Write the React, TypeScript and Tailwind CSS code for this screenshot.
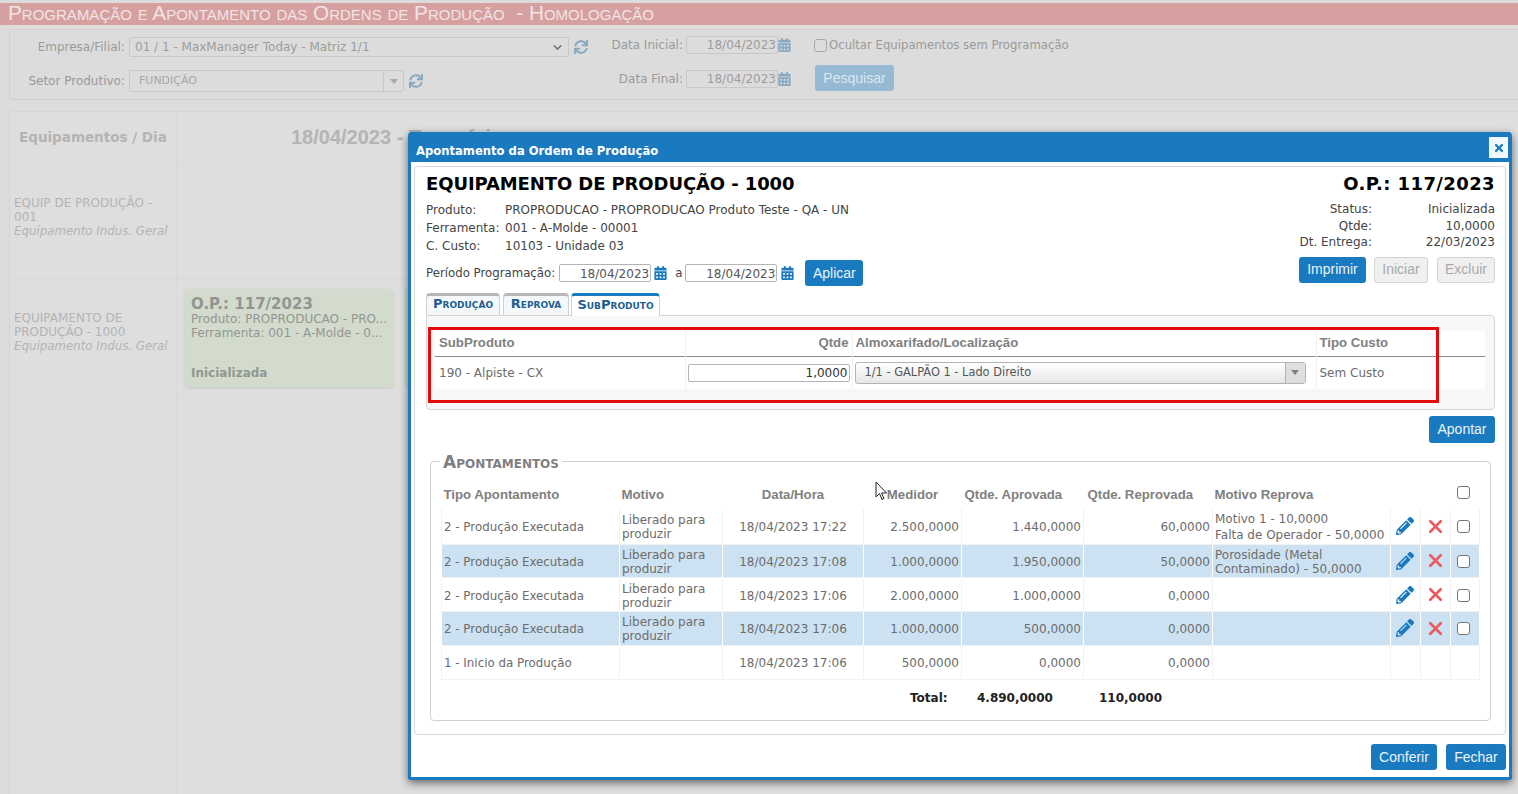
import { ChevronDown, X } from "lucide-react";
import { FaCalendarAlt, FaPencilAlt, FaSync, FaTimes } from "react-icons/fa";

const verdana = "font-['DejaVu_Sans',Verdana,sans-serif]";
const arial = "font-['Liberation_Sans',Arial,sans-serif]";

const rows = [
  {
    tipo: "2 - Produção Executada",
    motivo: "Liberado para produzir",
    data: "18/04/2023 17:22",
    medidor: "2.500,0000",
    aprovada: "1.440,0000",
    reprovada: "60,0000",
    reprova: ["Motivo 1 - 10,0000", "Falta de Operador - 50,0000"],
    h: "h-[35px]",
    actions: true,
    blue: false,
  },
  {
    tipo: "2 - Produção Executada",
    motivo: "Liberado para produzir",
    data: "18/04/2023 17:08",
    medidor: "1.000,0000",
    aprovada: "1.950,0000",
    reprovada: "50,0000",
    reprova: ["Porosidade (Metal Contaminado) - 50,0000"],
    h: "h-[33.7px]",
    actions: true,
    blue: true,
  },
  {
    tipo: "2 - Produção Executada",
    motivo: "Liberado para produzir",
    data: "18/04/2023 17:06",
    medidor: "2.000,0000",
    aprovada: "1.000,0000",
    reprovada: "0,0000",
    reprova: [],
    h: "h-[33.7px]",
    actions: true,
    blue: false,
  },
  {
    tipo: "2 - Produção Executada",
    motivo: "Liberado para produzir",
    data: "18/04/2023 17:06",
    medidor: "1.000,0000",
    aprovada: "500,0000",
    reprovada: "0,0000",
    reprova: [],
    h: "h-[33.7px]",
    actions: true,
    blue: true,
  },
  {
    tipo: "1 - Inicio da Produção",
    motivo: "",
    data: "18/04/2023 17:06",
    medidor: "500,0000",
    aprovada: "0,0000",
    reprovada: "0,0000",
    reprova: [],
    h: "h-[34px]",
    actions: false,
    blue: false,
  },
];

function Check({ faded }: { faded?: boolean }) {
  return (
    <span
      className={`inline-block w-[13px] h-[13px] rounded-[3px] border align-middle ${
        faded ? "border-[#a8a8a8] bg-[#dcdcdc]" : "border-[#767676] bg-white"
      }`}
    />
  );
}

function Btn({ label, off, className = "" }: { label: string; off?: boolean; className?: string }) {
  return (
    <div
      className={`${arial} flex items-center justify-center rounded-[3px] text-[14px] ${
        off
          ? "bg-[#f0f0f0] border border-[#d4d4d4] text-[#a9a9a9]"
          : "bg-[#1a7abf] text-[#e8f4fc]"
      } ${className}`}
    >
      {label}
    </div>
  );
}

function DateBox({ value }: { value: string }) {
  return (
    <div className="w-[92px] h-[18px] border border-[#b4b4b4] rounded-[2px] bg-white text-[12px] text-[#555] text-right pr-[1px] leading-[18px]">
      {value}
    </div>
  );
}

function BackDate({ label }: { label: string }) {
  return (
    <div className="flex items-center">
      <span className="w-[83px] text-right text-[12px] text-[#9a9a9a]">{label}</span>
      <div className="w-[92px] h-[18px] ml-[3px] border border-[#c8c8c8] rounded-[2px] bg-[#dcdcdc] text-[12px] text-[#9c9c9c] text-right pr-[1px] leading-[17px]">
        18/04/2023
      </div>
      <FaCalendarAlt className="text-[#86a9c4] w-[13px] h-[14px]" />
    </div>
  );
}

export default function App() {
  return (
    <div className={`${verdana} relative w-[1518px] h-[794px] overflow-hidden bg-[#dcdcdc]`}>
      {/* Fundo escurecido */}
      <div className="pt-[3px]">
        <div
          className={`${arial} h-[22px] bg-[#d6a0a0] pl-[8px] text-[20.8px] leading-[20px] text-[#f2e4e4] [font-variant:small-caps] whitespace-pre`}
        >
          Programação e Apontamento das Ordens de Produção  - Homologação
        </div>

        <div className="ml-[9px] mt-[4px] h-[71px] border border-[#d0d0d0] rounded-l-[4px] border-r-0 flex">
          <div className="w-[590px] flex flex-col pt-[7px] gap-[13px]">
            <div className="flex items-center h-[20px]">
              <span className="w-[115px] text-right text-[12px] text-[#9a9a9a]">Empresa/Filial:</span>
              <div className="ml-[4px] w-[440px] h-[20px] border border-[#c8c8c8] rounded-[2px] text-[12px] text-[#9c9c9c] flex items-center justify-between pl-[5px] pr-[4px]">
                01 / 1 - MaxManager Today - Matriz 1/1
                <ChevronDown className="w-[13px] h-[13px] text-[#777]" strokeWidth={3} />
              </div>
              <FaSync className="ml-[5px] w-[14px] h-[14px] text-[#86a9c4]" />
            </div>
            <div className="flex items-center h-[22px]">
              <span className="w-[115px] text-right text-[12px] text-[#9a9a9a]">Setor Produtivo:</span>
              <div className="ml-[4px] w-[275px] h-[22px] border border-[#c8c8c8] rounded-[3px] text-[11px] text-[#a6a6a6] flex items-center justify-between pl-[9px]">
                <span className="pt-[1px]">FUNDIÇÃO</span>
                <div className="w-[20px] h-full border-l border-[#c8c8c8] flex items-center justify-center">
                  <div className="w-0 h-0 border-x-[4px] border-x-transparent border-t-[5px] border-t-[#a8a8a8]" />
                </div>
              </div>
              <FaSync className="ml-[5px] w-[14px] h-[14px] text-[#86a9c4]" />
            </div>
          </div>
          <div className="w-[214px] flex flex-col pt-[6px] gap-[16px]">
            <BackDate label="Data Inicial:" />
            <BackDate label="Data Final:" />
          </div>
          <div className="flex flex-col pt-[6px] gap-[11px]">
            <div className="flex items-center text-[11.7px] text-[#9a9a9a] h-[18px]">
              <Check faded />
              <span className="ml-[2px] pt-[1px]">Ocultar Equipamentos sem Programação</span>
            </div>
            <div className={`${arial} ml-[1px] w-[79px] h-[26px] bg-[#96bad3] text-[#dbe7ef] text-[14px] rounded-[3px] flex items-center justify-center`}>
              Pesquisar
            </div>
          </div>
        </div>

        <div className="ml-[9px] mt-[11px] border-l border-t border-[#d4d4d4] rounded-tl-[4px] grid grid-cols-[166px_1fr] gap-x-[1px] bg-[#d9d9d9]">
          <div className="h-[51px] bg-[#dedede] flex items-center pl-[9px] text-[13.5px] font-bold text-[#b4b4b4]">
            Equipamentos / Dia
          </div>
          <div className={`${arial} h-[51px] bg-[#dedede] pl-[114px] pt-[10px] text-[20px] font-bold text-[#b4b4b4] whitespace-nowrap`}>
            18/04/2023 - Terça-feira
          </div>
          <div className="h-[115px] bg-[#dedede] mt-[1px] pl-[4px] pt-[32px] text-[12px] leading-[14px] text-[#b4b4b4]">
            EQUIP DE PRODUÇÃO - 001
            <div className="italic text-[11.8px]">Equipamento Indus. Geral</div>
          </div>
          <div className="h-[115px] bg-[#dedede] mt-[1px]" />
          <div className="h-[115px] bg-[#dedede] mt-[1px] pl-[4px] pt-[31px] text-[12px] leading-[14px] text-[#b4b4b4]">
            EQUIPAMENTO DE PRODUÇÃO - 1000
            <div className="italic text-[11.8px]">Equipamento Indus. Geral</div>
          </div>
          <div className="h-[115px] bg-[#dedede] mt-[1px] flex gap-[11px] pl-[8px] pt-[9px]">
            <div className="w-[208px] h-[98px] rounded-[4px] bg-[#d3dbcd] shadow-[0_1px_3px_#c8c8c8] pl-[6px] pt-[7px] text-[#929692] text-[12px] leading-[14px]">
              <div className="text-[15px] font-bold leading-[16px]">O.P.: 117/2023</div>
              <div>Produto: PROPRODUCAO - PRO...</div>
              <div>Ferramenta: 001 - A-Molde - 0...</div>
              <div className="mt-[26px] font-bold">Inicializada</div>
            </div>
            <div className="w-[208px] h-[98px] rounded-[4px] bg-[#d3dbcd]" />
          </div>
          <div className="h-[400px] bg-[#dedede] mt-[1px]" />
          <div className="h-[400px] bg-[#dedede] mt-[1px]" />
        </div>
      </div>

      {/* Modal */}
      <div className="absolute left-[408px] top-[132px] w-[1104px] h-[648px] bg-white border-x-[3px] border-b-[3px] border-[#1a7abf] rounded-t-[4px] rounded-b-[3px] shadow-[0_3px_8px_rgba(0,0,0,0.55)] flex flex-col text-[#555]">
        <div className="h-[30px] -mx-[1px] bg-[#1a7abf] flex items-start justify-between pl-[6px] pr-[2px]">
          <span className="pt-[12px] text-[11.6px] leading-[14px] font-bold text-white">Apontamento da Ordem de Produção</span>
          <div className="w-[19px] h-[21px] mt-[5px] bg-[#f2f7fb] flex items-center justify-center">
            <FaTimes className="w-[12px] h-[12px] text-[#1a7abf]" />
          </div>
        </div>

        <div className="mx-[3px] mt-[4px] h-[569px] border border-[#d6d6d6] rounded-[4px] pl-[11px] pr-[10px] relative">
          <div className="flex justify-between h-[125px]">
            <div>
              <div className="text-[18px] font-bold text-black leading-[22px] pt-[6px] h-[34px] tracking-[-0.1px]">
                EQUIPAMENTO DE PRODUÇÃO - 1000
              </div>
              <div className="grid grid-cols-[79px_1fr] text-[12px] leading-[18px] text-[#444]">
                <span>Produto:</span>
                <span>PROPRODUCAO - PROPRODUCAO Produto Teste - QA - UN</span>
                <span>Ferramenta:</span>
                <span>001 - A-Molde - 00001</span>
                <span>C. Custo:</span>
                <span>10103 - Unidade 03</span>
              </div>
              <div className="flex items-center mt-[5px] text-[11.75px] text-[#444]">
                <span className="pt-[2px]">Período Programação:</span>
                <div className="ml-[4px] flex items-center">
                  <DateBox value="18/04/2023" />
                  <FaCalendarAlt className="ml-[3px] w-[13px] h-[14px] text-[#1a7abf]" />
                  <span className="ml-[8px] mr-[3px] pt-[2px]">a</span>
                  <DateBox value="18/04/2023" />
                  <FaCalendarAlt className="ml-[4px] w-[13px] h-[14px] text-[#1a7abf]" />
                </div>
                <Btn label="Aplicar" className="ml-[11px] w-[58px] h-[26px]" />
              </div>
            </div>
            <div className="flex flex-col items-end">
              <div className="text-[18px] font-bold text-black leading-[22px] pt-[6px] h-[34px] tracking-[0.4px]">O.P.: 117/2023</div>
              <div className="grid grid-cols-[auto_123px] text-[12px] leading-[16.5px] text-[#444] text-right">
                <span>Status:</span>
                <span>Inicializada</span>
                <span>Qtde:</span>
                <span>10,0000</span>
                <span>Dt. Entrega:</span>
                <span>22/03/2023</span>
              </div>
              <div className="flex mt-[6px]">
                <Btn label="Imprimir" className="w-[67px] h-[26px]" />
                <Btn label="Iniciar" off className="ml-[8px] w-[54px] h-[26px]" />
                <Btn label="Excluir" off className="ml-[9px] w-[58px] h-[26px]" />
              </div>
            </div>
          </div>

          {/* Abas */}
          <div className="flex items-end h-[23px] text-[13px] font-bold text-[#1d5f90] [font-variant:small-caps]">
            <div className="w-[74px] h-[22px] pb-[3px] border border-b-0 border-t-[3px] border-[#cfcfcf] border-t-[#b8b8b8] rounded-t-[4px] bg-[#f4f8fb] flex items-center justify-center">
              Produção
            </div>
            <div className="ml-[3px] w-[66px] h-[22px] pb-[3px] border border-b-0 border-t-[3px] border-[#cfcfcf] border-t-[#b8b8b8] rounded-t-[4px] bg-[#f4f8fb] flex items-center justify-center">
              Reprova
            </div>
            <div className="ml-[2px] w-[89px] h-[23px] pb-[3px] border border-b-0 border-t-[3px] border-[#cfcfcf] border-t-[#1a7abf] rounded-t-[4px] bg-white flex items-center justify-center translate-y-[1px] z-10">
              SubProduto
            </div>
          </div>

          <div className="h-[95px] border border-[#d6d6d6] rounded-b-[4px] rounded-tr-[4px] bg-[#f7f7f7] px-[8px] pt-[15px]">
            <table className="w-[1050px] table-fixed border-collapse bg-white text-[12px]">
              <colgroup>
                <col className="w-[250px]" />
                <col className="w-[167px]" />
                <col className="w-[464px]" />
                <col className="w-[169px]" />
              </colgroup>
              <thead>
                <tr className={`${arial} h-[25px] border-b border-[#8c8c8c] text-[13.2px] font-bold text-[#808080]`}>
                  <th className="text-left pl-[4px] font-bold border-r border-[#f2f2f2]">SubProduto</th>
                  <th className="text-right pr-[3px] font-bold">Qtde</th>
                  <th className="text-left pl-[3px] font-bold border-l border-[#f2f2f2]">Almoxarifado/Localização</th>
                  <th className="text-left pl-[3px] font-bold border-l border-[#f2f2f2]">Tipo Custo</th>
                </tr>
              </thead>
              <tbody>
                <tr className="h-[33px] text-[#6c6c6c]">
                  <td className="pl-[4px] border-r border-[#f2f2f2]">190 - Alpiste - CX</td>
                  <td className="pl-[2px]">
                    <div className="w-[162px] h-[18px] border border-[#b4b4b4] rounded-[2px] text-right text-[12px] leading-[17px] text-[#333] pr-[1px]">
                      1,0000
                    </div>
                  </td>
                  <td className="pl-[2px] pr-[3px] border-l border-[#f2f2f2]">
                    <div className="w-[451px] h-[22px] border border-[#b4b4b4] rounded-[3px] bg-gradient-to-b from-white to-[#e6e6e6] flex items-center justify-between pl-[9px] text-[11.4px] text-[#555]">
                      1/1 - GALPÃO 1 - Lado Direito
                      <div className="w-[20px] h-full border-l border-[#b4b4b4] bg-[#dedede] flex items-center justify-center">
                        <div className="w-0 h-0 border-x-[4px] border-x-transparent border-t-[5px] border-t-[#808080]" />
                      </div>
                    </div>
                  </td>
                  <td className="pl-[3px] border-l border-[#f2f2f2]">Sem Custo</td>
                </tr>
              </tbody>
            </table>
          </div>

          <div className="flex justify-end mt-[6px]">
            <Btn label="Apontar" className="w-[66px] h-[27px]" />
          </div>

          <div className="relative mt-[18px] ml-[4px] w-[1061px] h-[260px] border border-[#d0d0d0] rounded-[4px] px-[10px] pt-[19px]">
            <div className={`${verdana} absolute left-[9px] -top-[8px] bg-white px-[3px] text-[17px] font-bold leading-[17px] text-[#808080] [font-variant:small-caps]`}>
              Apontamentos
            </div>
            <table className="w-[1038px] table-fixed border-collapse text-[12px] text-[#6c6c6c]">
              <colgroup>
                <col className="w-[178px]" />
                <col className="w-[103px]" />
                <col className="w-[141px]" />
                <col className="w-[98px]" />
                <col className="w-[122px]" />
                <col className="w-[129px]" />
                <col className="w-[178px]" />
                <col className="w-[30px]" />
                <col className="w-[30px]" />
                <col className="w-[29px]" />
              </colgroup>
              <thead>
                <tr className={`${arial} h-[28px] text-[13.2px] text-[#808080]`}>
                  <th className="text-left pl-[2px] font-bold">Tipo Apontamento</th>
                  <th className="text-left pl-[2px] font-bold">Motivo</th>
                  <th className="text-center font-bold">Data/Hora</th>
                  <th className="text-center font-bold">Medidor</th>
                  <th className="text-left pl-[3px] font-bold">Qtde. Aprovada</th>
                  <th className="text-left pl-[4px] font-bold">Qtde. Reprovada</th>
                  <th className="text-left pl-[2px] font-bold">Motivo Reprova</th>
                  <th />
                  <th />
                  <th className="text-center font-normal pb-[6px] pr-[3px]">
                    <Check />
                  </th>
                </tr>
              </thead>
              <tbody>
                {rows.map((r, i) => (
                  <tr
                    key={i}
                    className={`${r.h} border-b border-[#f2f2f2] leading-[14px] [&>td]:border-x [&>td]:border-[#f2f2f2] ${
                      r.blue ? "bg-[#cce2f3] [&>td]:border-white" : ""
                    }`}
                  >
                    <td className="pl-[2px] pt-[2px] text-[11.85px]">{r.tipo}</td>
                    <td className="pl-[2px] pt-[2px]">{r.motivo}</td>
                    <td className="text-center pt-[2px]">{r.data}</td>
                    <td className="text-right pr-[2px] pt-[2px]">{r.medidor}</td>
                    <td className="text-right pr-[2px] pt-[2px]">{r.aprovada}</td>
                    <td className="text-right pr-[2px] pt-[2px]">{r.reprovada}</td>
                    <td className="pl-[2px] pt-[2px]">
                      {r.reprova.map((m) => (
                        <div key={m} className={r.reprova.length > 1 ? "leading-[16px]" : ""}>
                          {m}
                        </div>
                      ))}
                    </td>
                    <td className="text-center">
                      {r.actions && <FaPencilAlt className="inline w-[18px] h-[18px] -ml-[2px] text-[#1a7abf]" />}
                    </td>
                    <td>
                      {r.actions && <X className="block mx-auto w-[21px] h-[21px] text-[#ec5a5f]" strokeWidth={3} />}
                    </td>
                    <td className="text-center pr-[3px]">{r.actions && <Check />}</td>
                  </tr>
                ))}
              </tbody>
            </table>
            <div className="flex h-[38px] pb-[2px] items-center text-[12px] font-bold text-[#222]">
              <span className="ml-[469px] w-[37px] text-right">Total:</span>
              <span className="ml-[30px] w-[75px] text-right">4.890,0000</span>
              <span className="ml-[47px] w-[63px] text-right">110,0000</span>
            </div>
          </div>
        </div>

        <div className="flex justify-end gap-[9px] mt-[9px] pr-[3px]">
          <Btn label="Conferir" className="w-[66px] h-[26px]" />
          <Btn label="Fechar" className="w-[60px] h-[26px]" />
        </div>
      </div>

      {/* Marcação vermelha sobre a captura */}
      <div className="absolute left-[428px] top-[327px] w-[1011px] h-[76px] border-[3px] border-[#e30b0b]" />

      {/* Cursor */}
      <svg className="absolute left-[875px] top-[481px]" width="13" height="20" viewBox="0 0 13 20">
        <path d="M1 1v15l3.500-3.500 2.500 6 2-1-2.500-5.500h5z" fill="white" stroke="#222" strokeWidth="1" />
      </svg>
    </div>
  );
}
